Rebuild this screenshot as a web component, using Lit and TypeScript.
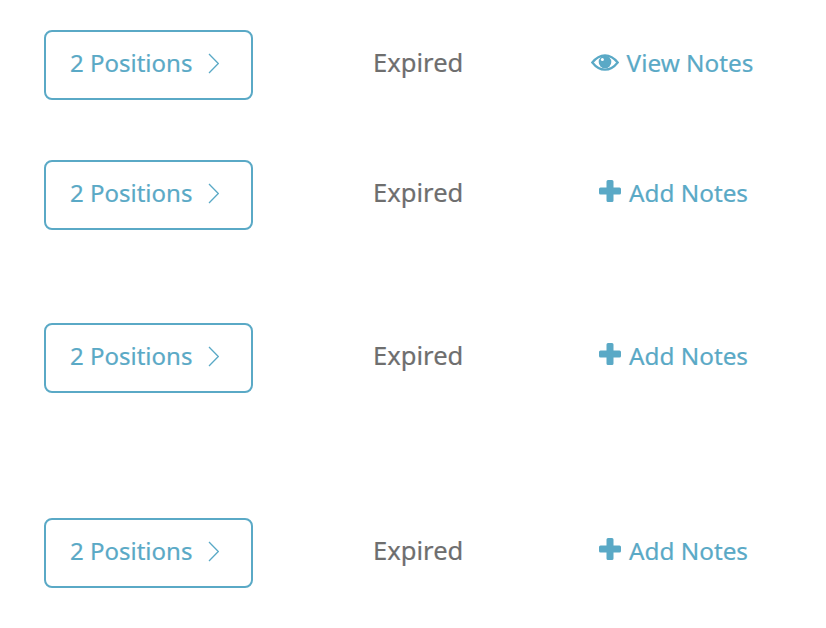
import { LitElement, html, css, svg } from "lit";
import { customElement } from "lit/decorators.js";

const eye = svg`<path fill="none" stroke="currentColor" stroke-width="2.2" d="M1.300 8.500C5 3.800 9.500 1.300 14 1.300S23 3.800 26.700 8.500C23 13.200 18.500 15.700 14 15.700S5 13.200 1.300 8.500Z"/><circle cx="14" cy="8" r="6.300" fill="currentColor"/><circle cx="11.400" cy="5.600" r="1.500" fill="#fff"/>`;

const rows = [
  { note: "View Notes", icon: "eye", cls: "r1" },
  { note: "Add Notes", icon: "plus", cls: "r2" },
  { note: "Add Notes", icon: "plus", cls: "r3" },
  { note: "Add Notes", icon: "plus", cls: "r4" },
];

@customElement("app-root")
export class AppRoot extends LitElement {
  static styles = css`
    :host {
      display: block;
      width: 826px;
      height: 628px;
      background: #fff;
      font-family: "Noto Sans", "Open Sans", sans-serif;
      font-size: 24px;
      -webkit-text-stroke: 0.2px currentColor;
      box-sizing: border-box;
      padding: 30px 0 0 44px;
    }
    .row {
      display: grid;
      grid-template-columns: 209px 300px 240px;
      align-items: center;
      height: 70px;
    }
    .r2 { margin-top: 60px; }
    .r3 { margin-top: 93px; }
    .r4 { margin-top: 125px; }
    .btn {
      box-sizing: border-box;
      height: 70px;
      border: 2px solid #5aa9c6;
      border-radius: 8px;
      display: flex;
      align-items: center;
      padding-left: 24px;
      gap: 16px;
      color: #5aa9c6;
    }
    .txt { padding-bottom: 6px; }
    .chev { width: 11px; height: 21px; margin-top: -4px; }
    .status {
      color: #6e6e6e;
      padding: 0 0 6px 120px;
      font-size: 25.6px;
      white-space: nowrap;
    }
    .note {
      display: flex;
      justify-content: center;
      align-items: center;
      gap: 8px;
      color: #5aa9c6;
      font-size: 24.3px;
      white-space: nowrap;
    }
    .eye { width: 28px; height: 17px; margin: -6px 0 0 -2px; }
    .plus { width: 22px; height: 22px; margin: -8px 0 0 1px; }
  `;

  render() {
    return rows.map(
      (r) => html`
        <div class="row ${r.cls}">
          <div class="btn">
            <span class="txt">2 Positions</span>
            <svg class="chev" viewBox="0 0 11 21"><path fill="none" stroke="currentColor" stroke-width="1.300" d="M1 1 10.300 10.500 1 20"/></svg>
          </div>
          <div class="status">Expired</div>
          <div class="note">
            ${r.icon === "eye"
              ? html`<svg class="eye" viewBox="0 0 28 17">${eye}</svg>`
              : html`<svg class="plus" viewBox="0 0 22 22"><path fill="currentColor" d="M7.500 1.500A1.500 1.500 0 0 1 9 0h4a1.500 1.500 0 0 1 1.500 1.500v6h6A1.500 1.500 0 0 1 22 9v4a1.500 1.500 0 0 1-1.500 1.500h-6v6A1.500 1.500 0 0 1 13 22H9a1.500 1.500 0 0 1-1.500-1.500v-6h-6A1.500 1.500 0 0 1 0 13V9a1.500 1.500 0 0 1 1.500-1.500h6Z"/></svg>`}
            <span class="txt">${r.note}</span>
          </div>
        </div>
      `
    );
  }
}
